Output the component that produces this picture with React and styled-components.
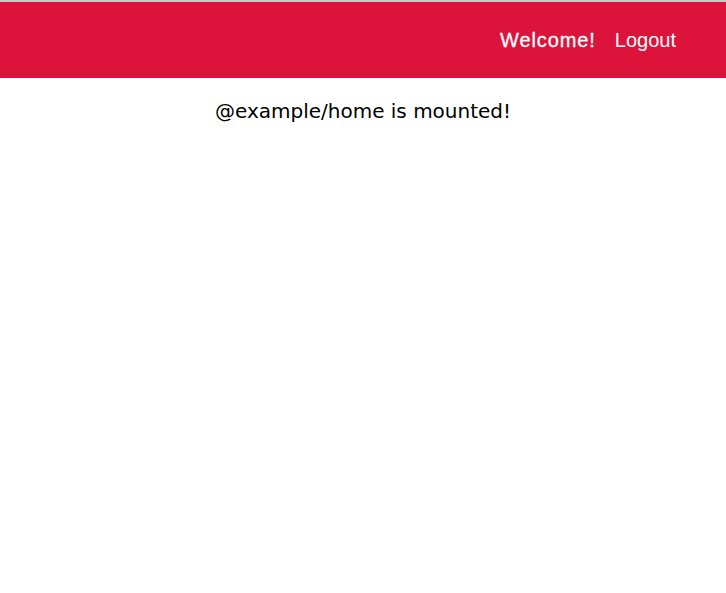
import React from "react";
import styled, { createGlobalStyle } from "styled-components";

const GlobalStyle = createGlobalStyle`
  body {
    margin: 0;
    background: #fff;
  }
`;

const App = () => {
  return <Page>
      <GlobalStyle />
      <Header>
        <NavItem $wide>Welcome!</NavItem>
        <NavItem>Logout</NavItem>
      </Header>
      <Mounted>@example/home is mounted!</Mounted>
    </Page>;
};

/*
==== Component Styles ====
*/

const Page = styled.div`
  border-top: 2px solid #c8c8c8;
`;

const Header = styled.header`
  height: 76px;
  background-color: #dc143c;
  display: flex;
  align-items: center;
  justify-content: flex-end;
  gap: 19px;
  padding-right: 50px;
`;

const NavItem = styled.span`
  color: #fff;
  font-family: "Liberation Sans", Arial, sans-serif;
  font-size: 20px;
  letter-spacing: ${props => (props.$wide ? "0.9px" : "normal")};
  -webkit-text-stroke: ${props => (props.$wide ? "0.3px #fff" : "0")};
  cursor: pointer;
`;

const Mounted = styled.p`
  margin: 21px 0 0;
  text-align: center;
  font-family: "DejaVu Sans", sans-serif;
  font-size: 20px;
  color: #000;
`;

export default App;
